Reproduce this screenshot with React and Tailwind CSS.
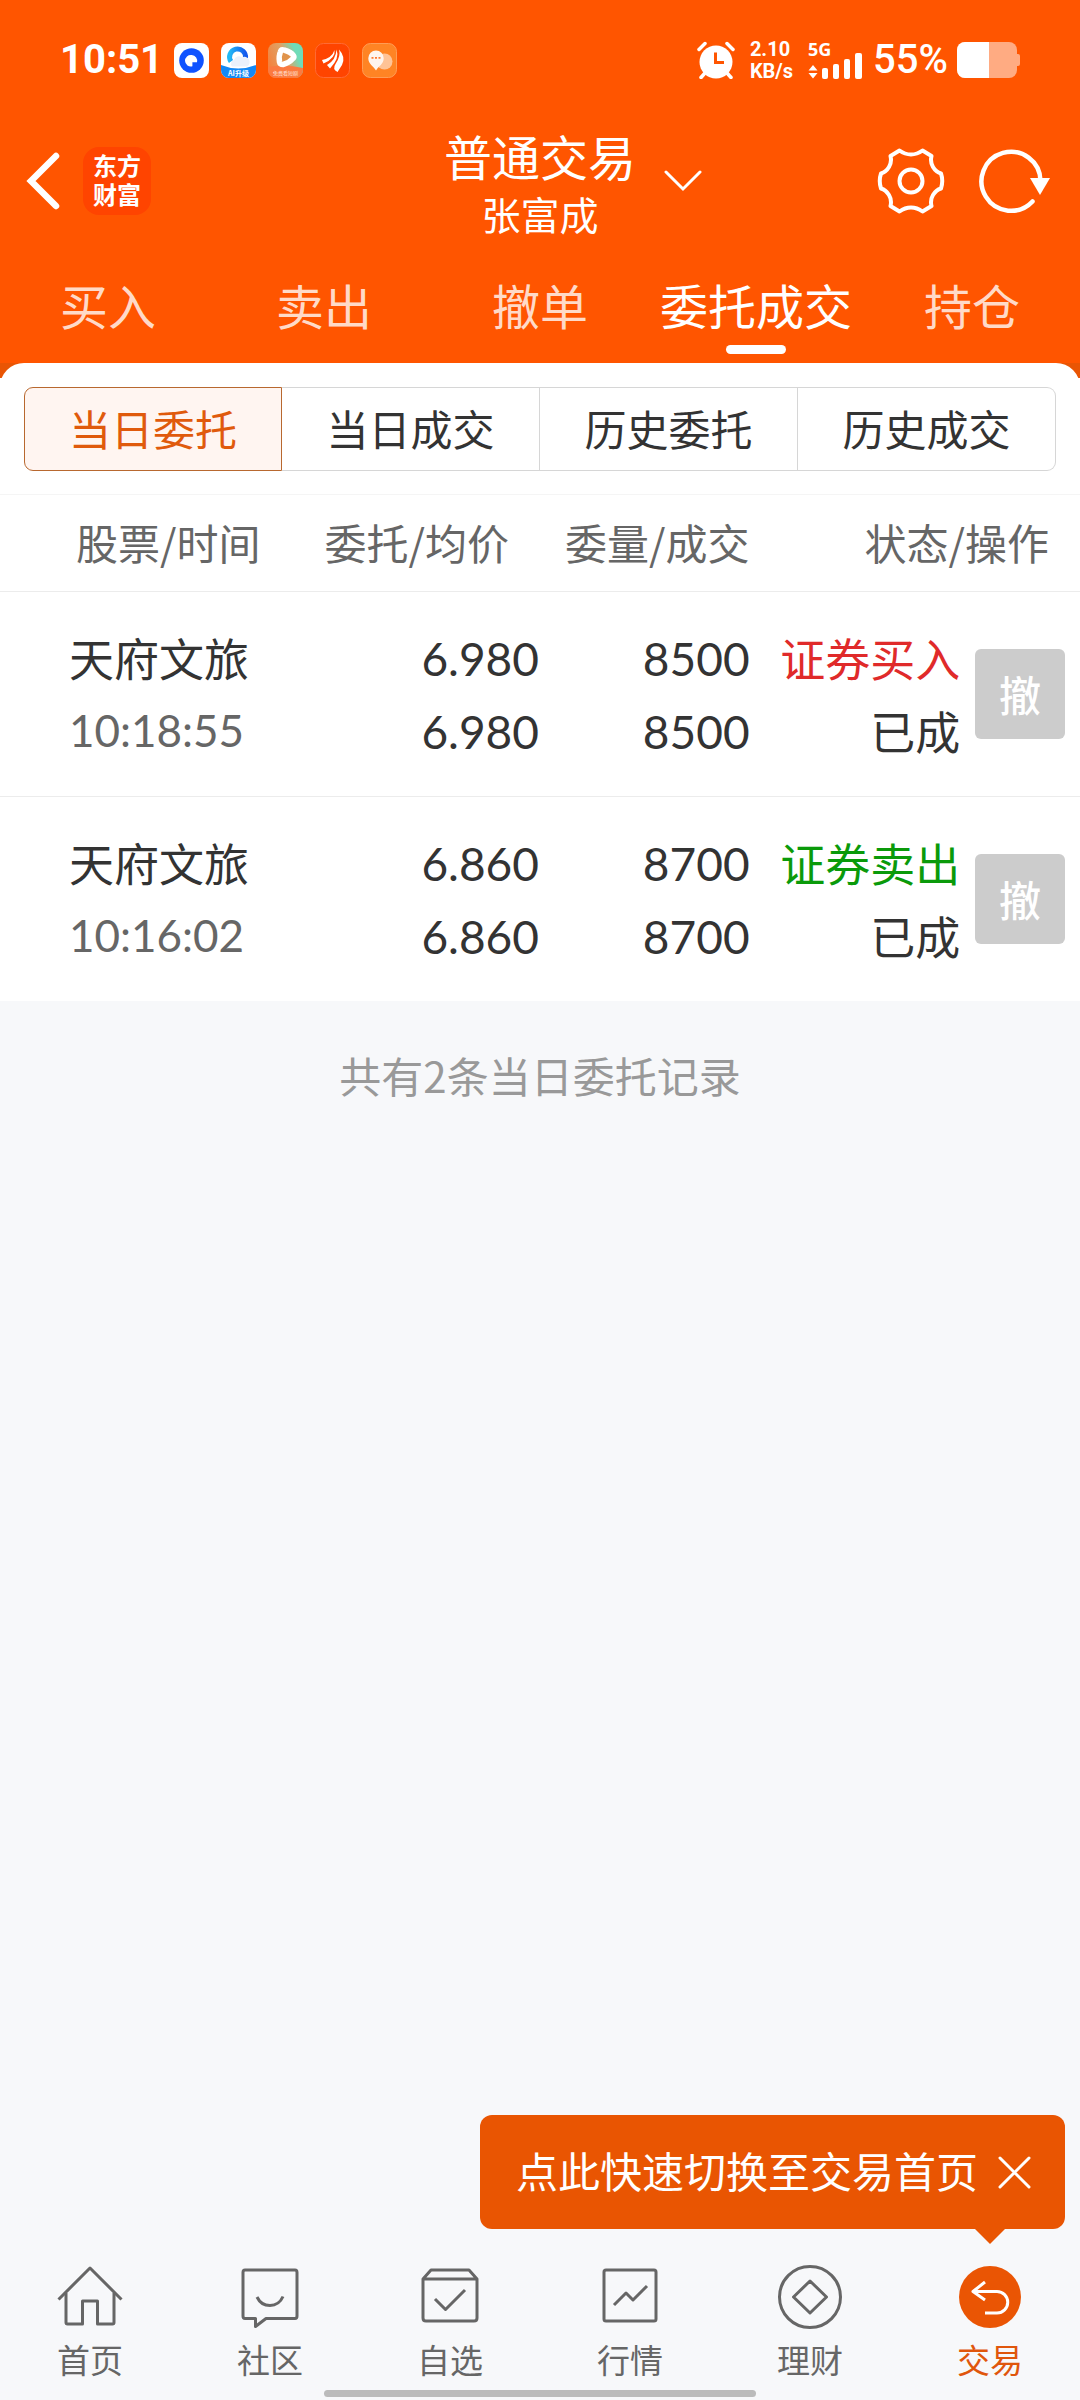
import React from "react";

const orders = [
  { name: "天府文旅", time: "10:18:55", price: "6.980", avg: "6.980", qty: "8500", filled: "8500", side: "证券买入", sideClass: "text-[#e02a2a]", status: "已成" },
  { name: "天府文旅", time: "10:16:02", price: "6.860", avg: "6.860", qty: "8700", filled: "8700", side: "证券卖出", sideClass: "text-[#0a9a0a]", status: "已成" },
];

const tabs = ["买入", "卖出", "撤单", "委托成交", "持仓"];
const segments = ["当日委托", "当日成交", "历史委托", "历史成交"];

function AppIcons() {
  return (
    <div className="flex gap-3">
      <svg className="size-[35px]" viewBox="0 0 35 35">
        <rect width="35" height="35" rx="8" fill="#fff" />
        <circle cx="17.5" cy="17.5" r="12.3" fill="#0f52ff" />
        <path d="M17.8 12a5.8 5.8 0 1 0 .6 11.3v-4h4.6A5.8 5.8 0 0 0 17.800 12z" fill="#fff" />
      </svg>
      <svg className="size-[35px]" viewBox="0 0 35 35">
        <defs>
          <clipPath id="ai-clip"><rect width="35" height="35" rx="8" /></clipPath>
          <linearGradient id="ai-ring" x1="0" x2="1"><stop offset="0" stopColor="#22b8f5" /><stop offset="1" stopColor="#1259ee" /></linearGradient>
        </defs>
        <g clipPath="url(#ai-clip)">
          <rect width="35" height="35" fill="#fff" />
          <path d="M0 22Q17 29 35 22V35H0z" fill="#1489f5" />
          <path d="M10 18.500A8 8 0 1 1 24.500 15" fill="none" stroke="url(#ai-ring)" strokeWidth="5" />
          <path d="M11 23.500a4 4 0 0 1 2-6.500 5 5 0 0 1 8-2.500 5 5 0 0 1 5 9z" fill="#eaf1fb" />
          <text x="17.500" y="33" textAnchor="middle" fontSize="7" fontWeight="700" fill="#fff">AI升级</text>
        </g>
      </svg>
      <svg className="size-[35px]" viewBox="0 0 35 35">
        <defs>
          <clipPath id="play-clip"><rect width="35" height="35" rx="8" /></clipPath>
          <linearGradient id="play-bg" x1="0" x2="1" y1=".6" y2=".2"><stop offset="0" stopColor="#f5813c" /><stop offset=".5" stopColor="#dda468" /><stop offset=".8" stopColor="#6fdcb8" /></linearGradient>
        </defs>
        <g clipPath="url(#play-clip)">
          <rect width="35" height="35" fill="url(#play-bg)" />
          <path d="M0 24Q17 21 35 25V35H0z" fill="#fb7a40" />
          <path d="M12.500 8.500Q13 6 16 7Q23 9 25.500 12.500Q26.500 14 25 15.500Q21 20 15 21.500Q12 21.500 11.500 19Q10.500 13 12.500 8.500z" fill="#e0944c" stroke="#fff" strokeWidth="5.500" strokeLinejoin="round" />
          <text x="17.500" y="32" textAnchor="middle" fontSize="5" fill="#ffe4d6">免费看短剧</text>
        </g>
      </svg>
      <svg className="size-[35px]" viewBox="0 0 35 35">
        <rect x=".5" y=".5" width="34" height="34" rx="8" fill="#ff4400" stroke="#ff6a35" />
        <path d="M7 17Q17 15 19.500 7Q21 15 8.500 20.500zM12 22Q21 17 21.500 6.500Q25 15 15 25.500zM22.500 29Q17 26 20.500 21Q26 13 24 6.500Q31 14 27 22z" fill="#fff" />
      </svg>
      <svg className="size-[35px]" viewBox="0 0 35 35">
        <rect x=".5" y=".5" width="34" height="34" rx="8" fill="#ff8424" stroke="#ff9c55" />
        <circle cx="22.500" cy="18.500" r="8" fill="#ffc396" />
        <path d="M14 7.500a7.700 7.700 0 0 1 7.700 7.700C21.700 21 16.500 23 14 27.500C11.500 23 6.300 21 6.300 15.200A7.700 7.700 0 0 1 14 7.500z" fill="#fff5ee" />
        <path d="M9.500 14.800h2M13 14.800h2M16.500 14.800h2" stroke="#ff7a30" strokeWidth="1.800" />
      </svg>
    </div>
  );
}

function StatusBar() {
  return (
    <div className="flex h-[120px] items-center pr-[60px] pl-[60px] text-white">
      <div className="flex items-center gap-[11px]">
        <span className="font-['Roboto',sans-serif] text-[40px] leading-[48px] font-bold">10:51</span>
        <AppIcons />
      </div>
      <div className="ml-auto flex items-center">
        <svg className="h-[38px] w-[38px]" viewBox="0 0 38 38">
          <circle cx="19" cy="21" r="16.500" fill="#fff" />
          <path d="M2 8.500L8 2.500M36 8.500L30 2.500M8 32L4 36.500M30 32L34 36.500" stroke="#fff" strokeWidth="3.500" strokeLinecap="round" />
          <path d="M18.500 11.500V21.500H27" stroke="#ff5500" strokeWidth="3" fill="none" />
        </svg>
        <span className="ml-[15px] font-['Roboto',sans-serif] text-[20px] leading-[22px] font-bold">
          2.10
          <br />
          KB/s
        </span>
        <svg className="ml-[15px] h-[38px] w-[56px] overflow-visible" viewBox="0 0 56 38">
          <text x="0" y="15" fontSize="18" fontWeight="700" fill="#fff" className="font-['Noto_Sans',sans-serif]">5G</text>
          <path d="M.5 29.500L5 24l4.500 5.500zM.5 32L5 37.500L9.500 32z" fill="#fff" />
          <rect x="14" y="27" width="6" height="11" rx="2" fill="#fff" />
          <rect x="25" y="23" width="6" height="15" rx="2" fill="#fff" />
          <rect x="36" y="18" width="6" height="20" rx="2" fill="#fff" />
          <rect x="47" y="12" width="7" height="26" rx="2" fill="#fff" />
        </svg>
        <span className="ml-[9px] font-['Roboto',sans-serif] text-[40px] leading-[40px] font-medium">55%</span>
        <svg className="ml-[9px] h-[36px] w-[63px]" viewBox="0 0 63 36">
          <defs><clipPath id="battery"><rect width="60" height="36" rx="8" /></clipPath></defs>
          <path d="M60 12h1q2 0 2 2v8q0 2-2 2h-1z" fill="#ffab82" />
          <g clipPath="url(#battery)">
            <rect width="60" height="36" fill="#ffab82" />
            <rect width="32" height="36" fill="#fff" />
          </g>
        </svg>
      </div>
    </div>
  );
}

function TitleBar() {
  return (
    <div className="grid h-[122px] grid-cols-[1fr_auto_1fr] items-center text-white">
      <div className="flex items-center gap-[23px] pl-[26px]">
        <button aria-label="返回">
          <svg className="block h-[58px] w-[34px]" viewBox="0 0 34 58">
            <path d="M30 4L5 29L30 54" fill="none" stroke="#fff" strokeWidth="6.500" strokeLinecap="round" />
          </svg>
        </button>
        <span className="flex size-[68px] items-center justify-center rounded-2xl bg-[#ff4400] pb-1 text-[24px] leading-[29px] font-bold">
          <span>
            东方
            <br />
            财富
          </span>
        </span>
      </div>
      <button className="relative flex flex-col items-center pt-0.5">
        <span className="text-[48px] leading-[62px]">普通交易</span>
        <span className="text-[39px] leading-[54px]">张富成</span>
        <svg className="absolute inset-y-0 left-full my-auto ml-[28px] h-[22px] w-[38px]" viewBox="0 0 38 22">
          <path d="M2 2L19 19L36 2" fill="none" stroke="#fff" strokeWidth="3" strokeLinecap="round" />
        </svg>
      </button>
      <div className="flex items-center justify-end gap-[33px] pr-[30px]">
        <button aria-label="设置">
          <svg className="block size-[68px]" viewBox="-34 -34 68 68" fill="none" stroke="#fff" strokeWidth="4" strokeLinejoin="round">
            <path d="M-11.500 -30.500Q-6 -26.500 0 -26.500T11.500 -30.500L20.500 -25Q19 -19 22 -14T30 -7.500Q32.500 0 30 7.500Q25 9 22 14T20.500 25L11.500 30.500Q6 26.500 0 26.500T-11.500 30.500L-20.500 25Q-19 19 -22 14T-30 7.500Q-32.500 0 -30 -7.500Q-25 -9 -22 -14T-20.500 -25z" />
            <circle r="11.500" />
          </svg>
        </button>
        <button aria-label="刷新">
          <svg className="block h-[68px] w-[72px]" viewBox="-33 -34 72 68">
            <path d="M29.500 0A29.500 29.500 0 1 0 21.500 20.500" fill="none" stroke="#fff" strokeWidth="4.500" strokeLinecap="round" />
            <path d="M19 -3H39L29 14z" fill="#fff" />
          </svg>
        </button>
      </div>
    </div>
  );
}

function Tabs() {
  return (
    <nav className="grid grid-cols-5 pt-[27px]">
      {tabs.map((t) => (
        <a key={t} href="#" className={`flex h-[94px] flex-col items-center whitespace-nowrap text-[48px] leading-[70px] ${t === "委托成交" ? "text-white" : "text-[#ffdac8]"}`}>
          {t}
          {t === "委托成交" && <span className="mt-[6px] h-[9px] w-[60px] rounded-full bg-white" />}
        </a>
      ))}
    </nav>
  );
}

function Segments() {
  return (
    <div className="px-6 pt-6 pb-[23px]">
      <div className="grid grid-cols-4">
        {segments.map((s, i) => (
          <button
            key={s}
            className={
              "h-[84px] border pb-0.5 text-[42px] leading-[60px] first:rounded-l-[9px] last:rounded-r-[9px] " +
              (i === 0 ? "border-[#b8682f] bg-[#fff5f1] text-[#e05a0c]" : "border-l-0 border-[#d6d6d6] text-[#333]")
            }
          >
            {s}
          </button>
        ))}
      </div>
    </div>
  );
}

function Orders() {
  return (
    <table className="w-full table-fixed border-collapse">
      <colgroup>
        <col className="w-[28%]" />
        <col className="w-[22%]" />
        <col className="w-[19.5%]" />
        <col className="w-[19.5%]" />
        <col className="w-[11%]" />
      </colgroup>
      <thead>
        <tr className="h-[97px] border-y border-t-[#f5f5f5] border-b-[#ececec] text-[42px] leading-[60px] text-[#666]">
          <th className="pb-0.5 pl-[76px] text-left font-normal whitespace-nowrap">股票/时间</th>
          <th className="pr-[31px] pb-0.5 text-right font-normal whitespace-nowrap">委托/均价</th>
          <th className="pr-[1px] pb-0.5 text-right font-normal whitespace-nowrap">委量/成交</th>
          <th colSpan={2} className="pr-[31px] pb-0.5 text-right font-normal">状态/操作</th>
        </tr>
      </thead>
      <tbody>
        {orders.map((o) => (
          <tr key={o.time} className="h-[205px] border-b border-[#ececec] text-[45px] leading-[73px] text-[#333] last:h-[204px] last:border-b-0">
            <td className="pl-[69px]">
              <div>{o.name}</div>
              <div className="font-['Lato',sans-serif] text-[44px] text-[#666]">{o.time}</div>
            </td>
            <td className="pt-[2px] pr-[1px] text-right font-['Lato',sans-serif] text-[46px]">
              <div>{o.price}</div>
              <div>{o.avg}</div>
            </td>
            <td className="pt-[2px] pr-[1px] text-right font-['Lato',sans-serif] text-[46px]">
              <div>{o.qty}</div>
              <div>{o.filled}</div>
            </td>
            <td className="pr-[1px] text-right whitespace-nowrap">
              <div className={o.sideClass}>{o.side}</div>
              <div>{o.status}</div>
            </td>
            <td className="pr-[15px]">
              <button disabled className="ml-auto block size-[90px] rounded-md bg-[#ccc] text-[42px] leading-[60px] font-medium text-white">撤</button>
            </td>
          </tr>
        ))}
      </tbody>
    </table>
  );
}

const navItems = [
  {
    label: "首页",
    icon: (
      <>
        <path d="M2.500 35.500L34 4L65.500 35.500" />
        <path d="M10 29V58.500Q10 60 11.500 60H26.500V37H41.500V60H56.500Q58 60 58 58.500V29" />
      </>
    ),
  },
  {
    label: "社区",
    icon: (
      <>
        <path d="M9 6H59Q61 6 61 8.500V52Q61 54.500 59 54.500H30L19.500 62.500V54.500H9Q7 54.500 7 52V8.500Q7 6 9 6z" />
        <path d="M21 33Q25 41.500 34 41.500T47 32.500" />
      </>
    ),
  },
  {
    label: "自选",
    icon: (
      <>
        <path d="M7 15L15 6H53L61 15V54Q61 57 58 57H10Q7 57 7 54zM7 15H61" />
        <path d="M19 35L29.500 45.500L49 26" />
      </>
    ),
  },
  {
    label: "行情",
    icon: (
      <>
        <rect x="8" y="6" width="52" height="51" rx="2" />
        <path d="M18 41L30 29L37 36L51 22" />
      </>
    ),
  },
  {
    label: "理财",
    icon: (
      <>
        <circle cx="34" cy="33" r="30.500" />
        <path d="M34 17L50.500 33L34 49L17.500 33z" />
      </>
    ),
  },
  {
    label: "交易",
    active: true,
    icon: (
      <>
        <circle cx="34" cy="33" r="31" fill="#ea5504" stroke="none" />
        <path d="M29 18L17 27.500L29 36M17 27.500H41A10.500 10.500 0 0 1 41 49H29" stroke="#fff" />
      </>
    ),
  },
];

function BottomNav() {
  return (
    <footer className="relative">
      <div className="absolute right-[15px] bottom-full mb-[15px] flex h-[114px] items-center rounded-xl bg-[#e95502] pr-[34px] pl-[36px] text-white">
        <span className="pb-1 text-[42px] leading-[60px] whitespace-nowrap">点此快速切换至交易首页</span>
        <button aria-label="关闭" className="ml-[20px]">
          <svg className="block size-[33px]" viewBox="0 0 33 33">
            <path d="M2 2L31 31M31 2L2 31" stroke="#fff" strokeWidth="3" strokeLinecap="round" />
          </svg>
        </button>
        <svg className="absolute top-full right-[60px] h-[15px] w-[30px]" viewBox="0 0 30 15">
          <path d="M0 0H30L15 15z" fill="#e95502" />
        </svg>
      </div>
      <nav className="grid grid-cols-6 pt-[20px]">
        {navItems.map((n) => (
          <a key={n.label} href="#" className={`flex flex-col items-center text-[33px] leading-[48px] ${n.active ? "text-[#e0560c]" : "text-[#666]"}`}>
            <svg className="h-[68px] w-[68px]" viewBox="0 0 68 68" fill="none" stroke="currentColor" strokeWidth="3" strokeLinejoin="round">
              {n.icon}
            </svg>
            <span className="mt-[3px] mb-[2px]">{n.label}</span>
          </a>
        ))}
      </nav>
      <div className="mx-auto mt-[5px] mb-[3px] h-[7px] w-2/5 rounded-full bg-[#bbb]" />
    </footer>
  );
}

export default function App() {
  return (
    <div className="flex min-h-screen flex-col bg-[#f7f8fa] font-['Noto_Sans_CJK_SC',sans-serif]">
      <header className="bg-[#ff5500]">
        <StatusBar />
        <TitleBar />
        <Tabs />
      </header>
      <main className="flex-1">
        <section className="bg-linear-to-b from-[#e95504] from-[15px] to-white to-[15px]">
          <div className="rounded-t-3xl bg-white">
            <Segments />
            <Orders />
          </div>
        </section>
        <p className="pt-[44px] text-center text-[42px] leading-[60px] text-[#999]">共有2条当日委托记录</p>
      </main>
      <BottomNav />
    </div>
  );
}
